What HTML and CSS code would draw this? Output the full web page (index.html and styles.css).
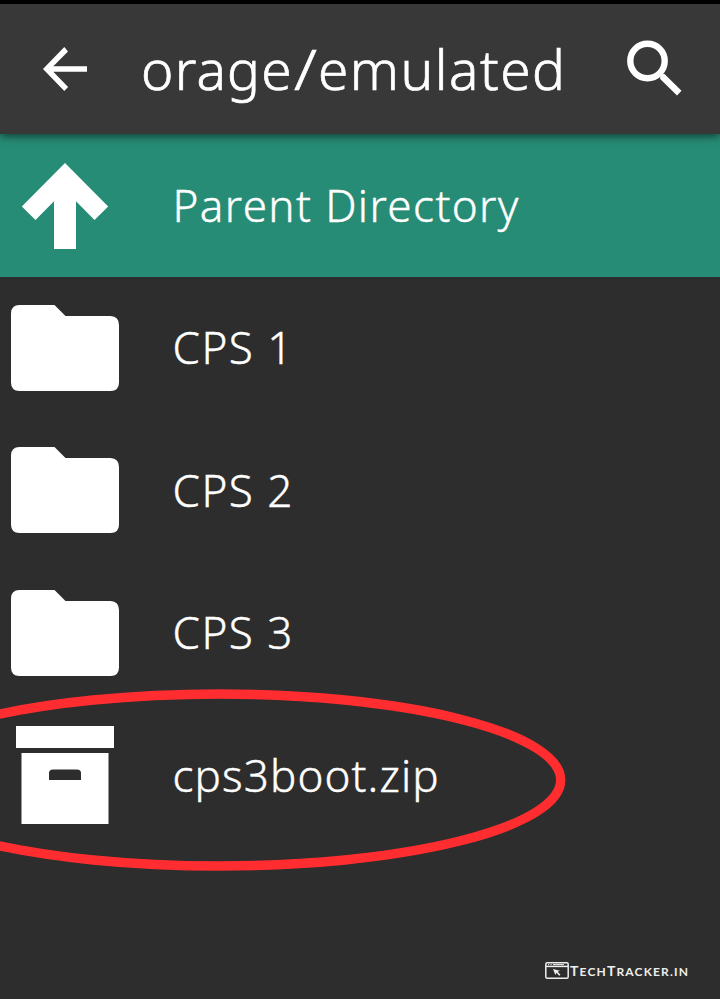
FILE: index.html
```
<!DOCTYPE html>
<html lang="en">
<head>
<meta charset="utf-8">
<title>File browser</title>
<link rel="stylesheet" href="styles.css">
</head>
<body>
<div class="screen">
  <header class="toolbar">
    <svg class="back" viewBox="0 0 44 44"><path d="M44 19.2H10.3L25 4.6 21.3 0 0 22l21.3 22 3.8-4.1L10.3 24.8H44z"/></svg>
    <h1 class="title"><span class="volume">orage</span><span class="slash">/</span>emulated</h1>
    <svg class="search" viewBox="0 0 56 56"><circle class="lens" cx="21.5" cy="20" r="17.200"/><path d="M38.500 33L55.500 49.800 51 54.500 34.200 38V35.500L36.500 33z"/></svg>
  </header>
  <main class="list">
    <div class="row parent">
      <svg class="icon" viewBox="0 0 130 143"><path d="M65 29l43.200 43.400L94.500 86 76 67.200V115H54V67.200L35.500 86 21.800 72.400z"/></svg>
      <span class="label l-parent">Parent Directory</span>
    </div>
    <div class="row">
      <svg class="icon" viewBox="0 0 130 143"><path d="M19.500 28H54.500L65.500 39H110.500Q119 39.500 119 48V105.500Q119 114 110.500 114H19.500Q11 114 11 105.500V36.500Q11 28 19.500 28z"/></svg>
      <span class="label l-folder">CPS 1</span>
    </div>
    <div class="row">
      <svg class="icon" viewBox="0 0 130 143"><path d="M19.500 28H54.500L65.500 39H110.500Q119 39.500 119 48V105.500Q119 114 110.500 114H19.500Q11 114 11 105.500V36.500Q11 28 19.500 28z"/></svg>
      <span class="label l-folder">CPS 2</span>
    </div>
    <div class="row">
      <svg class="icon" viewBox="0 0 130 143"><path d="M19.500 28H54.500L65.500 39H110.500Q119 39.500 119 48V105.500Q119 114 110.500 114H19.500Q11 114 11 105.500V36.500Q11 28 19.500 28z"/></svg>
      <span class="label l-folder">CPS 3</span>
    </div>
    <div class="row">
      <svg class="icon" viewBox="0 0 130 143"><path fill-rule="evenodd" d="M16 22H114V44H16zM21.500 49H108.500V120H21.500zM49 76H81V69Q81 65.500 77 65.500H53Q49 65.500 49 69z"/></svg>
      <span class="label l-zip">cps3boot.zip</span>
    </div>
  </main>
  <footer class="brand">
    <svg class="brand-icon" viewBox="0 0 24 17"><rect class="frame" x=".8" y=".8" width="22.400" height="15.400" rx="1.500"/><path class="frame" d="M1 4.400H23"/><path class="dots" d="M3 2.600h1.200M5.500 2.600h1.200M8 2.600h11"/><path d="M8 7l7 1.700-2.300 1 2.800 3-1.300 1-2.700-3-1.100 2.300z"/></svg>
    <span class="brand-name">T<small>ECH</small>T<small>RACKER.IN</small></span>
  </footer>
  <svg class="highlight" viewBox="0 0 720 200"><ellipse cx="219" cy="100" rx="341.700" ry="86"/></svg>
</div>
</body>
</html>
```
FILE: styles.css
```
* { box-sizing: border-box; }
body { margin: 0; background: #2d2d2d; }
svg { display: block; flex: none; fill: #fff; }
.screen {
  position: relative;
  width: 720px;
  height: 999px;
  overflow: hidden;
  display: flex;
  flex-direction: column;
  background: #2d2d2d;
  border-top: 4px solid #000;
  color: #fff;
  font-family: "Noto Sans", "Open Sans", sans-serif;
  font-weight: 300;
}
.toolbar {
  flex: none;
  height: 130px;
  display: flex;
  align-items: center;
  padding: 0 38px 0 43px;
  background: #383838;
  box-shadow: 0 2px 9px rgba(0, 0, 0, .6);
  z-index: 1;
}
.back { width: 44px; height: 44px; }
.title {
  flex: 1;
  margin: 0 0 0 54px;
  font-size: 55px;
  font-weight: 300;
  line-height: 76px;
  white-space: nowrap;
  letter-spacing: 1.5px;
  -webkit-text-stroke: .7px #fff;
}
.volume { letter-spacing: 1.2px; }
.slash {
  display: inline-block;
  margin: 0 3px;
  letter-spacing: 0;
  transform: scaleX(1.2);
}
.search { width: 56px; height: 56px; overflow: visible; }
.lens { fill: none; stroke: #fff; stroke-width: 6.4; }
.list { flex: 1; }
.row { height: 142.5px; display: flex; align-items: center; }
.parent { height: 143px; background: #278c76; }
.icon { width: 130px; height: 143px; margin-right: 42.5px; }
.label {
  padding-bottom: 2px;
  font-size: 44px;
  line-height: 60px;
  white-space: nowrap;
  -webkit-text-stroke: .4px #fff;
}
.l-parent { letter-spacing: 1.4px; }
.l-folder { letter-spacing: 1.5px; }
.l-zip { letter-spacing: 1.1px; }
.brand {
  flex: none;
  display: flex;
  align-items: center;
  height: 18px;
  margin: 0 32px 20px 545px;
}
.brand-icon { width: 24px; height: 17px; fill: #eee; }
.frame { fill: none; stroke: #eee; stroke-width: 1.5; }
.dots { stroke: #eee; stroke-width: 1; }
.brand-name {
  margin-left: 1px;
  padding-top: 2px;
  color: #eee;
  font: 700 14px/18px Lato, sans-serif;
  letter-spacing: 1.15px;
  white-space: nowrap;
}
.brand-name small { font-size: 12px; }
.highlight {
  position: absolute;
  left: 0;
  top: 676px;
  width: 720px;
  height: 200px;
}
.highlight ellipse { fill: none; stroke: #ff2d2f; stroke-width: 9.4; }
```
